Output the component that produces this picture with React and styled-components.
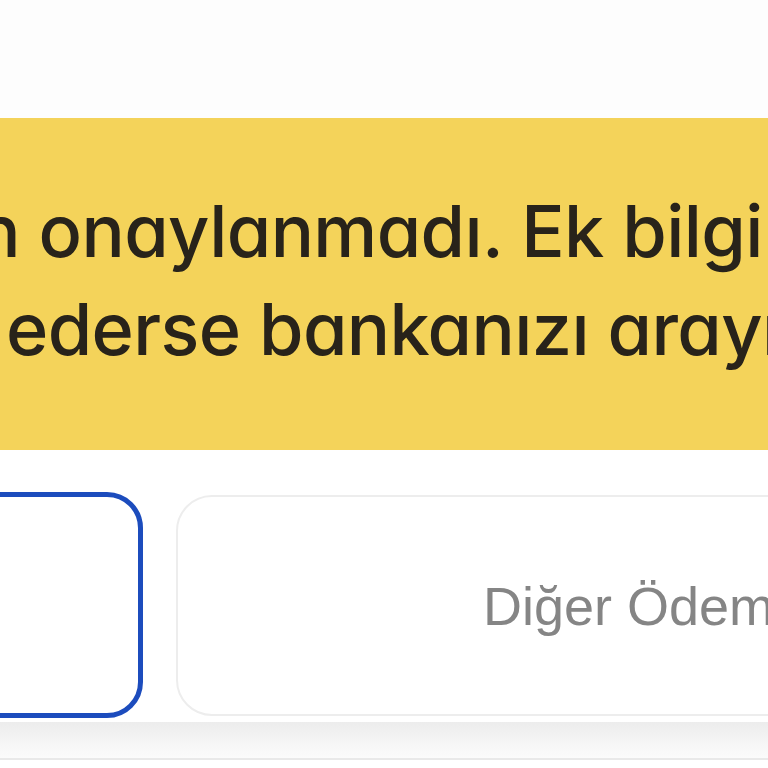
import React from "react";
import styled, { createGlobalStyle } from "styled-components";

const Global = createGlobalStyle`
  html, body { margin: 0; padding: 0; background: #ffffff; }
  body { width: 768px; height: 768px; overflow: hidden; }
`;

const Viewport = styled.div`
  width: 1008px;
  margin-left: -120px;
  display: flex;
  flex-direction: column;
`;

const TopSpace = styled.div`
  height: 118px;
  background: #fdfdfd;
`;

const Banner = styled.div`
  background: #f4d35a;
  padding: 64px 0 72px 120px;
  font-family: Inter, "Open Sans", sans-serif;
  font-feature-settings: "cv11" 1;
  font-weight: 500;
  font-size: 72px;
  line-height: 98px;
  color: #28231a;
`;

const Line = styled.div`
  display: flex;
  white-space: nowrap;
  padding-left: ${(p) => p.$start}px;
  letter-spacing: ${(p) => p.$track}px;
`;

const Lead = styled.span`
  display: inline-flex;
  justify-content: flex-end;
  width: 0;
  white-space: pre;
`;

const Rest = styled.span`
  white-space: pre;
`;

const CardRow = styled.div`
  display: grid;
  grid-template-columns: 263px 1fr;
  gap: 33px;
  margin-top: 42px;
  height: 226px;
`;

const Card = styled.div`
  box-sizing: border-box;
  border-radius: 36px;
  background: #ffffff;
  border: ${(p) => (p.$active ? "5px solid #1c4cbd" : "2px solid #ededed")};
  display: flex;
  align-items: center;
  white-space: nowrap;
  overflow: hidden;
  padding-left: ${(p) => p.$pad || 0}px;
  font-family: "Liberation Sans", Arial, sans-serif;
  font-size: 54px;
  color: #858585;
  margin-top: ${(p) => (p.$active ? 0 : 3)}px;
  height: ${(p) => (p.$active ? 226 : 221)}px;
`;

const Tray = styled.div`
  margin-top: 4px;
  height: 36px;
  background: linear-gradient(#ececec, #f6f6f6 60%, #fbfbfb);
  border-bottom: 2px solid #e9e9e9;
`;

export default function App() {
  return (
    <>
      <Global />
      <Viewport>
        <TopSpace />
        <Banner>
          <Line $start={20} $track={-0.6}>
            <Lead>Ödemeniz bankanız tarafından</Lead>
            <Rest> onaylanmadı. Ek bilgi: Yetersiz bakiye.</Rest>
          </Line>
          <Line $start={6} $track={-0.6}>
            <Lead>Sorun devam </Lead>
            <Rest>ederse bankanızı arayın.</Rest>
          </Line>
        </Banner>
        <CardRow>
          <Card $active />
          <Card $pad={305}>Diğer Ödeme Yöntemleri</Card>
        </CardRow>
        <Tray />
      </Viewport>
    </>
  );
}
